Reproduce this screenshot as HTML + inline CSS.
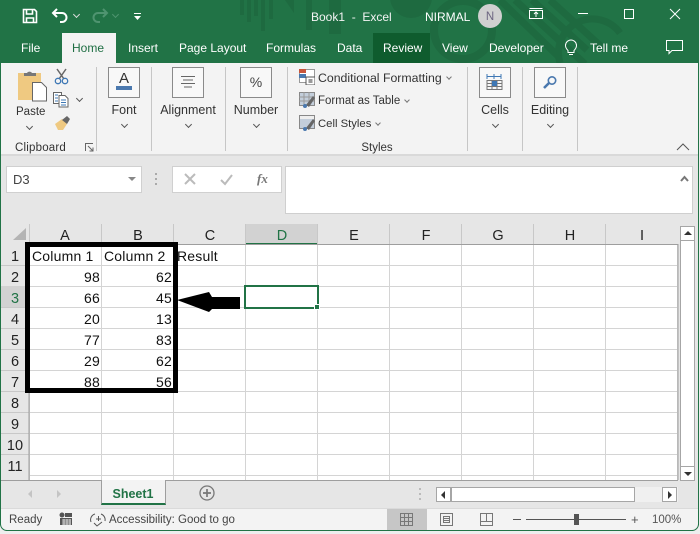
<!DOCTYPE html>
<html><head><meta charset="utf-8"><style>
*{box-sizing:border-box}
html,body{margin:0;padding:0;width:700px;height:534px;overflow:hidden;background:#eeeeee}
body{position:relative;font-family:"Liberation Sans",sans-serif}
.a{position:absolute}
.t{position:absolute;white-space:nowrap;line-height:16px;font-size:12.5px;color:#333}
.w{color:#fff;font-size:12px}
.c{transform:translateX(-50%)}
.g{position:absolute;white-space:nowrap;font-size:14px;line-height:18px;color:#111;letter-spacing:.2px}
.r{text-align:right;width:60px}
.h{position:absolute;font-size:14.5px;line-height:18px;color:#222;transform:translateX(-50%)}
.box{position:absolute;width:32px;height:31px;border:1px solid #8a8a8a;top:67px;background:#f8f8f8}
.sep{position:absolute;top:67px;width:1px;height:84px;background:#c6c6c6}
.chev{position:absolute;width:5px;height:5px;border-right:1px solid #555;border-bottom:1px solid #555;transform:rotate(45deg)}
</style></head><body>
<!-- title bar -->
<div class="a" style="left:0;top:0;width:699px;height:64px;background:#217346"></div>
<svg class="a" style="left:0;top:0" width="699" height="63" fill="none">
<g fill="#1e6a40"><rect x="240" y="0" width="4" height="15"/><rect x="247" y="0" width="4" height="22"/><rect x="254" y="0" width="4" height="16"/><rect x="261" y="0" width="4" height="31"/><rect x="269" y="0" width="4" height="19"/><path d="M285 0l9 0v13z"/><rect x="306" y="0" width="6" height="30"/><rect x="329" y="0" width="12" height="34"/></g>
<circle cx="411" cy="-3" r="21" fill="#1e6a40"/>
<circle cx="463" cy="30" r="29" stroke="#1e6a40" stroke-width="8"/>
<path d="M500 0l60 58M515 0l70 64M532 0l55 50M550 0l55 50" stroke="#1e6a40" stroke-width="7"/>
<path d="M560 63a34 34 0 0 1 60-30" stroke="#1e6a40" stroke-width="7"/>
</svg>
<!-- QAT -->
<svg class="a" style="left:22px;top:8px" width="16" height="16" fill="none" stroke="#fff" stroke-width="1.6"><path d="M1.500 1.500h11l2 2v11h-13z"/><path d="M4.500 2v4h6V2M4.500 15v-5h7v5" /></svg>
<svg class="a" style="left:51px;top:7px" width="18" height="17" fill="none" stroke="#fff" stroke-width="2"><path d="M6 2L2 6l4 4M2 6h9a4.500 4.500 0 0 1 0 9H9"/></svg>
<div class="chev" style="left:74px;top:12px;border-color:#ddd"></div>
<svg class="a" style="left:91px;top:7px" width="18" height="17" fill="none" stroke="#4f9470" stroke-width="2"><path d="M12 2l4 4-4 4M16 6H7a4.500 4.500 0 0 0 0 9h2"/></svg>
<div class="chev" style="left:113px;top:12px;border-color:#4f9470"></div>
<svg class="a" style="left:133px;top:12px" width="10" height="10"><rect x="1" y="1" width="7" height="1" fill="#fff"/><path d="M1 4h7l-3.500 4z" fill="#fff"/></svg>
<div class="t w" style="left:311px;top:9px;color:#f4f4f4">Book1 &nbsp;- &nbsp;Excel</div>
<div class="t w" style="left:425px;top:9px">NIRMAL</div>
<div class="a" style="left:478px;top:4px;width:24px;height:24px;border-radius:50%;background:#d0d0d0"></div>
<div class="t c" style="left:490px;top:9px;color:#6c6480;font-size:11.500px">N</div>
<svg class="a" style="left:529px;top:8px" width="15" height="12" fill="none" stroke="#fff"><path d="M.5 2.500h13v8h-13zM.5 .5h13M7 9V4M5 6l2-2 2 2"/></svg>
<div class="a" style="left:578px;top:13px;width:10px;height:1px;background:#fff"></div>
<div class="a" style="left:624px;top:9px;width:10px;height:10px;border:1px solid #fff"></div>
<svg class="a" style="left:669px;top:8px" width="12" height="12" stroke="#fff"><path d="M1 1l10 10M11 1L1 11"/></svg>
<!-- tabs -->
<div class="a" style="left:62px;top:33px;width:54px;height:31px;background:#f3f3f3"></div>
<div class="a" style="left:373px;top:33px;width:57px;height:30px;background:#0f5c2e"></div>
<div class="t w" style="left:21px;top:40px">File</div>
<div class="t" style="left:72px;top:40px;color:#1f6e43;font-size:12px">Home</div>
<div class="t w" style="left:128px;top:40px">Insert</div>
<div class="t w" style="left:179px;top:40px">Page Layout</div>
<div class="t w" style="left:266px;top:40px">Formulas</div>
<div class="t w" style="left:337px;top:40px">Data</div>
<div class="t w" style="left:383px;top:40px">Review</div>
<div class="t w" style="left:442px;top:40px">View</div>
<div class="t w" style="left:489px;top:40px">Developer</div>
<svg class="a" style="left:563px;top:39px" width="16" height="17" fill="none" stroke="#fff"><path d="M5 11.500C3.500 10 2.500 8.500 2.500 6.500a5.500 5.500 0 0 1 11 0c0 2-1 3.500-2.500 5v2H5zM6 15.500h4"/></svg>
<div class="t w" style="left:590px;top:40px">Tell me</div>
<svg class="a" style="left:666px;top:40px" width="18" height="15" fill="none" stroke="#fff"><path d="M.5 .5h16v10H6l-3 3v-3H.5z"/></svg>
<!-- ribbon -->
<div class="a" style="left:1px;top:63px;width:697px;height:93px;background:#f3f3f3;border-bottom:2px solid #d9d9d9"></div>
<div class="a" style="left:1px;top:156px;width:697px;height:68px;background:#e6e6e6"></div>
<!-- clipboard -->
<svg class="a" style="left:16px;top:69px" width="32" height="34">
<path d="M2 4h23v27H2z" fill="#efc981"/><path d="M8 7V4h3a3 3 0 0 1 5 0h4v3z" fill="#777"/>
<path d="M16.500 13.500h9l5 5v13.500h-14z" fill="#fff" stroke="#666"/></svg>
<svg class="a" style="left:54px;top:68px" width="16" height="17" fill="none"><path d="M3 1l7 10M12 1L5 11" stroke="#666" stroke-width="1.500"/><circle cx="4" cy="13" r="2.700" stroke="#3f78b5" stroke-width="1.300"/><circle cx="11" cy="13" r="2.700" stroke="#3f78b5" stroke-width="1.300"/></svg>
<svg class="a" style="left:53px;top:92px" width="17" height="16" fill="none" stroke="#666"><path d="M.5 .5h8v11h-8z" fill="#fff"/><path d="M6 3.500h6l3 3v8.500H6z" fill="#fff"/><path d="M2 3h3M2 6h3M2 9h3" stroke="#3f78b5"/><path d="M8 8h5M8 10.500h5M8 13h5" stroke="#3f78b5"/></svg>
<div class="chev" style="left:77px;top:96px"></div>
<svg class="a" style="left:54px;top:115px" width="17" height="16"><path d="M1 9l7-5 5 5-4 6H4z" fill="#efc981"/><path d="M8 5l5-4 3 3-3 5z" fill="#666"/></svg>
<div class="t" style="left:16px;top:104px;font-size:11.500px">Paste</div>
<div class="chev" style="left:27px;top:124px"></div>
<div class="t" style="left:15px;top:140px;letter-spacing:.2px;font-size:11.500px">Clipboard</div>
<svg class="a" style="left:85px;top:143px" width="9" height="9" fill="none" stroke="#666"><path d="M.5 8V.5H8M3 3l5 5M8 4.500V8H4.500"/></svg>
<div class="sep" style="left:96px"></div>
<!-- font -->
<div class="box" style="left:108px"></div>
<div class="t c" style="left:124px;top:71px;font-size:15px;color:#333">A</div>
<div class="a" style="left:116px;top:86px;width:16px;height:4px;background:#4a78ae"></div>
<div class="t c" style="left:124px;top:102px">Font</div>
<div class="chev" style="left:122px;top:122px"></div>
<div class="sep" style="left:151px"></div>
<!-- alignment -->
<div class="box" style="left:172px"></div>
<svg class="a" style="left:180px;top:76px" width="16" height="12" stroke="#666"><path d="M1 .5h14M3 4h10M1 7.500h14M4 11h8"/></svg>
<div class="t c" style="left:188px;top:102px">Alignment</div>
<div class="chev" style="left:186px;top:122px"></div>
<div class="sep" style="left:225px"></div>
<!-- number -->
<div class="box" style="left:240px"></div>
<div class="t c" style="left:256px;top:74px;font-size:14px;color:#444">%</div>
<div class="t c" style="left:256px;top:102px">Number</div>
<div class="chev" style="left:254px;top:122px"></div>
<div class="sep" style="left:287px"></div>
<!-- styles -->
<svg class="a" style="left:299px;top:69px" width="16" height="16"><rect x=".5" y=".5" width="15" height="13" fill="#fff" stroke="#999"/><rect x="0" y="0" width="7" height="4" fill="#c9553a"/><rect x="0" y="5" width="7" height="4" fill="#4a78ae"/><rect x="7" y="8" width="9" height="8" fill="#fff" stroke="#555"/><path d="M9.500 11h4M9.500 13h4" stroke="#333"/></svg>
<svg class="a" style="left:299px;top:92px" width="17" height="16"><rect x=".5" y=".5" width="15" height="13" fill="#c3cedb" stroke="#888"/><path d="M5 0v13M10 0v13M0 5h15M0 9h15" stroke="#999"/><path d="M7 13l7-9 2 2-6 9z" fill="#666"/><circle cx="6" cy="14" r="2" fill="#4a78ae"/></svg>
<svg class="a" style="left:299px;top:115px" width="17" height="16"><rect x=".5" y=".5" width="15" height="13" fill="#c3cedb" stroke="#888"/><rect x="1" y="1" width="14" height="3" fill="#eee"/><path d="M7 13l7-9 2 2-6 9z" fill="#666"/><circle cx="6" cy="14" r="2" fill="#4a78ae"/></svg>
<div class="t" style="left:318px;top:70px;font-size:12.300px">Conditional Formatting</div>
<div class="chev" style="left:447px;top:75px;width:4px;height:4px;border-color:#777"></div>
<div class="t" style="left:318px;top:93px;font-size:11.500px">Format as Table</div>
<div class="chev" style="left:405px;top:98px;width:4px;height:4px;border-color:#777"></div>
<div class="t" style="left:318px;top:116px;font-size:11.300px">Cell Styles</div>
<div class="chev" style="left:376px;top:121px;width:4px;height:4px;border-color:#777"></div>
<div class="t c" style="left:377px;top:140px;font-size:11.500px">Styles</div>
<div class="sep" style="left:467px"></div>
<!-- cells -->
<div class="box" style="left:479px"></div>
<svg class="a" style="left:486px;top:73px" width="18" height="18" fill="none" stroke="#777"><path d="M1 3.500h14" stroke="#3f78b5"/><path d="M1 1v5M8 1v5M15 1v5" stroke="#3f78b5"/><path d="M1 7.500h15v9H1zM1 10.500h15M1 13.500h15M6 7v10M11 7v10"/><rect x="6" y="8" width="5" height="5" fill="#3f78b5" stroke="none"/></svg>
<div class="t c" style="left:495px;top:102px">Cells</div>
<div class="chev" style="left:493px;top:122px"></div>
<div class="sep" style="left:522px"></div>
<!-- editing -->
<div class="box" style="left:534px"></div>
<svg class="a" style="left:542px;top:75px" width="16" height="15" fill="none" stroke="#4a78ae"><circle cx="10" cy="5.500" r="3.700" stroke-width="1.600"/><path d="M7 8l-5 5" stroke-width="2.600"/></svg>
<div class="t c" style="left:550px;top:102px">Editing</div>
<div class="chev" style="left:548px;top:122px"></div>
<div class="sep" style="left:577px"></div>
<svg class="a" style="left:676px;top:142px" width="14" height="9" fill="none" stroke="#555"><path d="M1 8l6-6 6 6"/></svg>
<!-- formula bar -->
<div class="a" style="left:6px;top:166px;width:136px;height:27px;background:#fff;border:1px solid #d0d0d0"></div>
<div class="t" style="left:13px;top:172px;color:#444;font-size:13px">D3</div>
<div class="a" style="left:128px;top:177px;border-left:4px solid transparent;border-right:4px solid transparent;border-top:4px solid #888"></div>
<svg class="a" style="left:155px;top:173px" width="4" height="14" fill="#aaa"><rect y="0" width="2" height="2"/><rect y="5" width="2" height="2"/><rect y="10" width="2" height="2"/></svg>
<div class="a" style="left:172px;top:166px;width:110px;height:27px;background:#fff;border:1px solid #d0d0d0"></div>
<svg class="a" style="left:184px;top:173px" width="60" height="13" fill="none" stroke="#bbb" stroke-width="2"><path d="M1 1l10 10M11 1L1 11M37 7l4 4 7-9"/></svg>
<div class="t" style="left:257px;top:171px;font:italic bold 13px 'Liberation Serif',serif;color:#777;line-height:16px">fx</div>
<div class="a" style="left:285px;top:166px;width:408px;height:48px;background:#fff;border:1px solid #cfcfcf"></div>
<svg class="a" style="left:680px;top:175px" width="9" height="7" fill="none" stroke="#777" stroke-width="2"><path d="M1 6l3.500-4L8 6"/></svg>
<!-- grid -->
<div class="a" style="left:1px;top:224px;width:697px;height:257px;background:#e6e6e6"></div>
<svg class="a" style="left:0;top:224px" width="700" height="257" shape-rendering="crispEdges">
<rect x="29" y="20" width="649" height="236" fill="#fff"/>
<rect x="245" y="0" width="73" height="19" fill="#d2d2d2"/>
<rect x="245" y="19" width="73" height="2" fill="#217346"/>
<g stroke="#d4d4d4"><path d="M101.500 20V256M173.500 20V256M245.500 20V256M317.500 20V256M389.500 20V256M461.500 20V256M533.500 20V256M605.500 20V256M677.500 20V256"/>
<path d="M29 41.500H678M29 62.500H678M29 83.500H678M29 104.500H678M29 125.500H678M29 146.500H678M29 167.500H678M29 188.500H678M29 209.500H678M29 230.500H678M29 251.500H678"/></g>
<g stroke="#c8c8c8"><path d="M29.500 0V256M101.500 0V20M173.500 0V20M245.500 0V20M317.500 0V20M389.500 0V20M461.500 0V20M533.500 0V20M605.500 0V20"/><path d="M1 41.500H29M1 62.500H29M1 83.500H29M1 104.500H29M1 125.500H29M1 146.500H29M1 167.500H29M1 188.500H29M1 209.500H29M1 230.500H29"/></g>
<path d="M29 20.500H678M29 20V256M678 20V256" stroke="#9e9e9e" fill="none"/>
<rect x="1" y="62" width="28" height="21" fill="#d2d2d2"/>
<path d="M13 16L26 4V16z" fill="#b4b4b4" shape-rendering="auto"/>
<rect x="1" y="256" width="677" height="1" fill="#9e9e9e"/>
</svg>
<div class="h" style="left:65px;top:227px">A</div><div class="h" style="left:138px;top:227px">B</div><div class="h" style="left:210px;top:227px">C</div><div class="h" style="left:282px;top:227px;color:#217346">D</div><div class="h" style="left:354px;top:227px">E</div><div class="h" style="left:426px;top:227px">F</div><div class="h" style="left:498px;top:227px">G</div><div class="h" style="left:570px;top:227px">H</div><div class="h" style="left:642px;top:227px">I</div>
<div class="h" style="left:15px;top:248px">1</div><div class="h" style="left:15px;top:269px">2</div><div class="h" style="left:15px;top:290px;color:#217346">3</div><div class="h" style="left:15px;top:311px">4</div><div class="h" style="left:15px;top:332px">5</div><div class="h" style="left:15px;top:353px">6</div><div class="h" style="left:15px;top:374px">7</div><div class="h" style="left:15px;top:395px">8</div><div class="h" style="left:15px;top:416px">9</div><div class="h" style="left:15px;top:437px">10</div><div class="h" style="left:15px;top:458px">11</div>
<!-- cells -->
<div class="g" style="left:32px;top:247px">Column 1</div><div class="g" style="left:104px;top:247px">Column 2</div><div class="g" style="left:177px;top:247px">Result</div>
<div class="g r" style="left:40px;top:268px">98</div><div class="g r" style="left:112px;top:268px">62</div>
<div class="g r" style="left:40px;top:289px">66</div><div class="g r" style="left:112px;top:289px">45</div>
<div class="g r" style="left:40px;top:310px">20</div><div class="g r" style="left:112px;top:310px">13</div>
<div class="g r" style="left:40px;top:331px">77</div><div class="g r" style="left:112px;top:331px">83</div>
<div class="g r" style="left:40px;top:352px">29</div><div class="g r" style="left:112px;top:352px">62</div>
<div class="g r" style="left:40px;top:373px">88</div><div class="g r" style="left:112px;top:373px">56</div>
<!-- black box -->
<div class="a" style="left:25px;top:242px;width:153px;height:151px;border:5px solid #000"></div>
<!-- arrow -->
<svg class="a" style="left:176px;top:290px" width="65" height="22"><path d="M1 10L33 2l3 5H64v12H36l-3 3z" fill="#000"/></svg>
<!-- selection -->
<div class="a" style="left:244px;top:285px;width:75px;height:24px;border:2px solid #217346"></div>
<div class="a" style="left:314px;top:304px;width:6px;height:6px;background:#217346;border:1px solid #fff"></div>
<!-- vertical scrollbar -->
<div class="a" style="left:680px;top:226px;width:15px;height:255px;background:#fff;border:1px solid #a6a6a6"></div>
<div class="a" style="left:680px;top:226px;width:15px;height:15px;border:1px solid #a6a6a6;background:#fff"></div>
<div class="a" style="left:684px;top:231px;border-left:4px solid transparent;border-right:4px solid transparent;border-bottom:4px solid #333"></div>
<div class="a" style="left:680px;top:466px;width:15px;height:15px;border:1px solid #a6a6a6;background:#fff"></div>
<div class="a" style="left:684px;top:472px;border-left:4px solid transparent;border-right:4px solid transparent;border-top:4px solid #333"></div>
<!-- sheet tabs -->
<div class="a" style="left:1px;top:481px;width:697px;height:27px;background:#e6e6e6"></div>
<div class="a" style="left:1px;top:508px;width:697px;height:22px;background:#f3f3f3;border-top:1px solid #dadada"></div>
<div class="a" style="left:28px;top:490px;border-top:4px solid transparent;border-bottom:4px solid transparent;border-right:4px solid #c4c4c4"></div>
<div class="a" style="left:57px;top:490px;border-top:4px solid transparent;border-bottom:4px solid transparent;border-left:4px solid #c4c4c4"></div>
<div class="a" style="left:101px;top:480px;width:65px;height:25px;background:#f3f3f3;border:1px solid #9e9e9e;border-top:0;border-bottom:2px solid #217346"></div>
<div class="t c" style="left:133px;top:486px;color:#217346;font-weight:bold;font-size:12.500px">Sheet1</div>
<svg class="a" style="left:199px;top:485px" width="17" height="17" fill="none" stroke="#777" stroke-width="1.300"><circle cx="8" cy="8" r="7"/><path d="M4 8h8M8 4v8" stroke-width="1.700"/></svg>
<svg class="a" style="left:419px;top:488px" width="4" height="15" fill="#bbb"><rect width="2" height="2"/><rect y="5" width="2" height="2"/><rect y="10" width="2" height="2"/></svg>
<div class="a" style="left:436px;top:487px;width:242px;height:15px;background:#f0f0f0"></div>
<div class="a" style="left:436px;top:487px;width:15px;height:15px;background:#fff;border:1px solid #a6a6a6"></div>
<div class="a" style="left:441px;top:491px;border-top:4px solid transparent;border-bottom:4px solid transparent;border-right:4px solid #333"></div>
<div class="a" style="left:451px;top:487px;width:184px;height:15px;background:#fff;border:1px solid #a6a6a6"></div>
<div class="a" style="left:662px;top:487px;width:15px;height:15px;background:#fff;border:1px solid #a6a6a6"></div>
<div class="a" style="left:668px;top:491px;border-top:4px solid transparent;border-bottom:4px solid transparent;border-left:4px solid #333"></div>
<!-- status -->
<div class="t" style="left:9px;top:512px;font-size:11.500px;color:#444">Ready</div>
<svg class="a" style="left:59px;top:512px" width="14" height="14"><circle cx="3" cy="3" r="2.500" fill="#555"/><rect x="6" y="1" width="7" height="4" fill="#555"/><rect x="1" y="6" width="12" height="7" fill="#555"/><path d="M3 8h9M3 10h9M3 12h9M5 7v6M8 7v6M11 7v6" stroke="#f3f3f3" stroke-width=".7"/></svg>
<svg class="a" style="left:89px;top:512px" width="18" height="16" fill="none" stroke="#555"><path d="M2 10A6 6 0 0 1 6 2M12 2a6 6 0 0 1 4 7M7 7h5M9.500 4v5M5 11l3 3 5-4"/></svg>
<div class="t" style="left:109px;top:512px;font-size:11.500px;color:#444">Accessibility: Good to go</div>
<div class="a" style="left:387px;top:509px;width:40px;height:21px;background:#c6c6c6"></div>
<svg class="a" style="left:400px;top:513px" width="14" height="14" fill="none" stroke="#777"><path d="M.5 .5h12v12H.5zM4.500 0v13M8.500 0v13M0 4.500h13M0 8.500h13"/></svg>
<svg class="a" style="left:440px;top:513px" width="14" height="14" fill="none" stroke="#777"><path d="M.5 .5h12v12H.5zM3.500 3.500h6v6h-6zM3.500 5.500h6M3.500 7.500h6"/></svg>
<svg class="a" style="left:480px;top:513px" width="14" height="14" fill="none" stroke="#777"><path d="M.5 .5h12v12H.5zM.5 8.500h6v-8M6.500 8.500h6"/></svg>
<div class="a" style="left:513px;top:519px;width:8px;height:1px;background:#555"></div>
<div class="a" style="left:526px;top:519px;width:100px;height:1px;background:#555"></div>
<div class="a" style="left:574px;top:514px;width:5px;height:11px;background:#555"></div>
<div class="t" style="left:631px;top:512px;font-size:13px;color:#555">+</div>
<div class="t" style="left:652px;top:512px;font-size:11.500px;color:#555">100%</div>
<!-- window border -->
<div class="a" style="left:0;top:63px;width:1px;height:462px;background:#217346"></div>
<div class="a" style="left:698px;top:63px;width:1px;height:462px;background:#217346"></div>
<div class="a" style="left:6px;top:530px;width:687px;height:1px;background:#217346"></div>
<svg class="a" style="left:0;top:524px" width="8" height="8"><path d="M0 0V8H8V7A7 6.500 0 0 1 0 0z" fill="#eeeeee"/><path d="M.5 0A6.500 6.500 0 0 0 7 6.500" fill="none" stroke="#217346"/></svg>
<svg class="a" style="left:691px;top:524px" width="8" height="8"><path d="M8 0V8H0V7A7 6.500 0 0 0 8 0z" fill="#eeeeee"/><path d="M7.500 0A6.500 6.500 0 0 1 1 6.500" fill="none" stroke="#217346"/></svg>
</body></html>
